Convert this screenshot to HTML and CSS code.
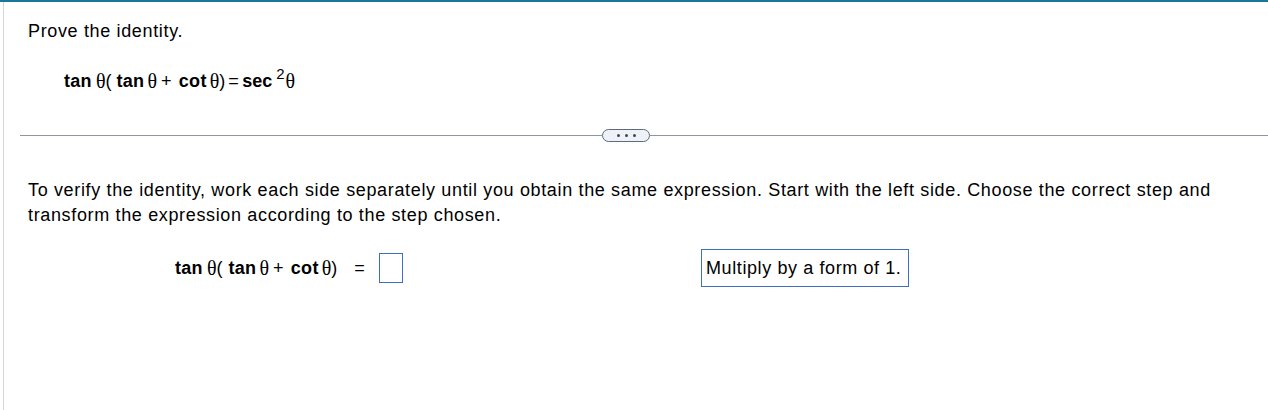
FILE: index.html
```html
<!DOCTYPE html>
<html>
<head>
<meta charset="utf-8">
<link rel="stylesheet" href="styles.css">
</head>
<body>
<div class="topbar"></div>
<div class="frame">
  <div class="question">
    <p class="prompt">Prove the identity.</p>
    <div class="eq eq-main">
      <b>tan</b><span class="th g4">θ</span><span class="pn">(</span><b class="g5">tan</b><span class="th g3">θ</span><span class="op g4">+</span><b class="g7">cot</b><span class="th g3">θ</span><span class="pn">)</span><span class="op g3">=</span><b class="g3 tight">sec</b><sup>2</sup><span class="th">θ</span>
    </div>
  </div>
  <div class="divider">
    <span class="rule rule-left"></span>
    <span class="pill"><i></i><i></i><i></i></span>
    <span class="rule"></span>
  </div>
  <p class="instr">To verify the identity, work each side separately until you obtain the same expression. Start with the left side. Choose the correct step and transform the expression according to the step chosen.</p>
  <div class="work">
    <div class="eq eq-step">
      <b>tan</b><span class="th g4">θ</span><span class="pn">(</span><b class="g6">tan</b><span class="th g3">θ</span><span class="op g4">+</span><b class="g7">cot</b><span class="th g3">θ</span><span class="pn">)</span><span class="op g17">=</span><span class="blank"></span>
    </div>
    <div class="choice">Multiply by a form of 1.</div>
  </div>
</div>
</body>
</html>
```

FILE: styles.css
```css
html, body {
  margin: 0;
  padding: 0;
  background: #fff;
}
body {
  font-family: "Liberation Sans", Arial, sans-serif;
  font-size: 18px;
  letter-spacing: 0.65px;
  color: #000;
  width: 1268px;
  height: 410px;
  overflow: hidden;
}
.topbar {
  height: 2px;
  background: #1b7797;
}
.frame {
  margin-left: 3px;
  border-left: 1px solid #d3d5da;
  height: 408px;
  padding-top: 1px;
}
.question {
  padding-left: 24px;
}
.prompt {
  margin: 18px 0 0 0;
  line-height: 20px;
}
.eq {
  display: flex;
  align-items: center;
  white-space: nowrap;
  line-height: 22px;
  letter-spacing: 0.3px;
}
.eq b {
  font-weight: bold;
}
.eq b.tight {
  letter-spacing: 0;
}
.th {
  font-family: "Liberation Serif", "Times New Roman", serif;
  font-size: 20px;
  letter-spacing: 0;
}
.pn {
  letter-spacing: 0;
}
.g3 { margin-left: 3px; }
.g4 { margin-left: 4px; }
.g5 { margin-left: 5px; }
.g6 { margin-left: 6px; }
.g7 { margin-left: 7px; }
.g17 { margin-left: 17px; }
.eq sup {
  font-weight: normal;
  font-size: 15px;
  letter-spacing: 0;
  line-height: 1;
  position: relative;
  top: -8px;
  margin-left: 4px;
  margin-right: 1px;
  vertical-align: baseline;
}
.eq-main {
  margin: 29px 0 0 36px;
}
.divider {
  display: flex;
  align-items: center;
  margin: 37px 0 0 16px;
}
.rule {
  flex: 1;
  height: 1px;
  background: #8f96a0;
}
.rule-left {
  flex: 0 0 582px;
}
.pill {
  width: 46px;
  height: 11px;
  border: 1px solid #5b6b80;
  border-radius: 7px;
  background: #eef1f5;
  display: flex;
  align-items: center;
  justify-content: center;
  gap: 5px;
}
.pill i {
  width: 3px;
  height: 3px;
  border-radius: 50%;
  background: #3c4653;
}
.instr {
  margin: 36px 0 0 24px;
  width: 1200px;
  line-height: 24.5px;
}
.work {
  display: flex;
  align-items: center;
  margin-top: 22px;
  padding-left: 171px;
}
.eq-step {
  width: 526px;
}
.blank {
  display: inline-block;
  width: 22px;
  height: 28px;
  border: 1px solid #3b6fcf;
  margin-left: 14px;
}
.choice {
  width: 202px;
  height: 36px;
  border: 1px solid #3d6fc4;
  padding-left: 4px;
  line-height: 36px;
  letter-spacing: 0.6px;
}
```
